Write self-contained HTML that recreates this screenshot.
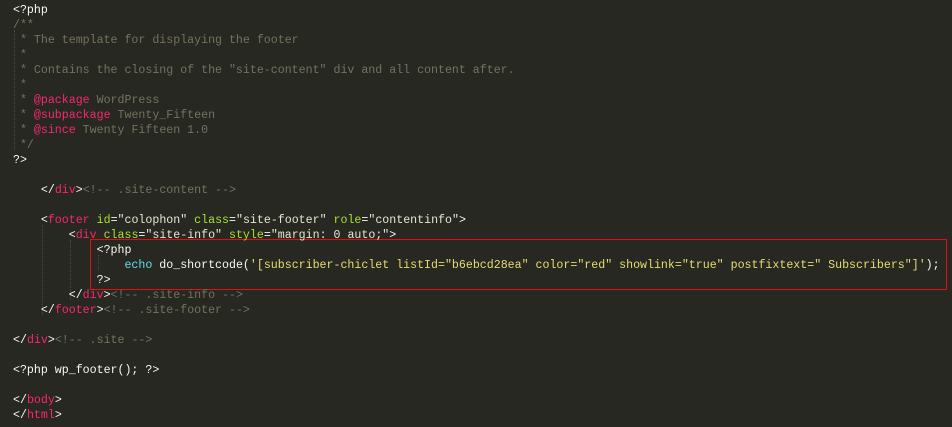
<!DOCTYPE html>
<html><head><meta charset="utf-8"><style>
html,body{margin:0;padding:0;background:#272822;width:952px;height:427px;overflow:hidden}
pre{margin:0;position:absolute;left:13px;top:3px;font-family:"Liberation Mono",monospace;font-size:11.62px;line-height:15px;color:#f8f8f2;white-space:pre}
.c{color:#75715e}.t{color:#f92672}.a{color:#a6e22e}.s{color:#e6e6d2}.y{color:#e6db74}.k{color:#66d9ef}
.box{position:absolute;left:90px;top:239px;width:855px;height:49px;border:1px solid #e01010}
.g{position:absolute;width:0;border-left:1px dotted #4a4a44}
</style></head><body>
<div class="g" style="left:14px;top:30px;height:120px"></div>
<div class="g" style="left:42px;top:225px;height:90px"></div>
<div class="g" style="left:70px;top:240px;height:60px"></div>
<div class="g" style="left:98px;top:255px;height:15px"></div>
<div class="box"></div>
<pre><span>&lt;?php</span>
<span class="c">/**
 * The template for displaying the footer
 *
 * Contains the closing of the "site-content" div and all content after.
 *
 * <span class="t">@package</span> WordPress
 * <span class="t">@subpackage</span> Twenty_Fifteen
 * <span class="t">@since</span> Twenty Fifteen 1.0
 */</span>
?&gt;

    &lt;/<span class="t">div</span>&gt;<span class="c">&lt;!-- .site-content --&gt;</span>

    &lt;<span class="t">footer</span> <span class="a">id</span>=<span class="s">"colophon"</span> <span class="a">class</span>=<span class="s">"site-footer"</span> <span class="a">role</span>=<span class="s">"contentinfo"</span>&gt;
        &lt;<span class="t">div</span> <span class="a">class</span>=<span class="s">"site-info"</span> <span class="a">style</span>=<span class="s">"margin: 0 auto;"</span>&gt;
            &lt;?php
                <span class="k">echo</span> do_shortcode(<span class="y">'[subscriber-chiclet listId="b6ebcd28ea" color="red" showlink="true" postfixtext=" Subscribers"]'</span>);
            ?&gt;
        &lt;/<span class="t">div</span>&gt;<span class="c">&lt;!-- .site-info --&gt;</span>
    &lt;/<span class="t">footer</span>&gt;<span class="c">&lt;!-- .site-footer --&gt;</span>

&lt;/<span class="t">div</span>&gt;<span class="c">&lt;!-- .site --&gt;</span>

&lt;?php wp_footer(); ?&gt;

&lt;/<span class="t">body</span>&gt;
&lt;/<span class="t">html</span>&gt;</pre>
</body></html>
